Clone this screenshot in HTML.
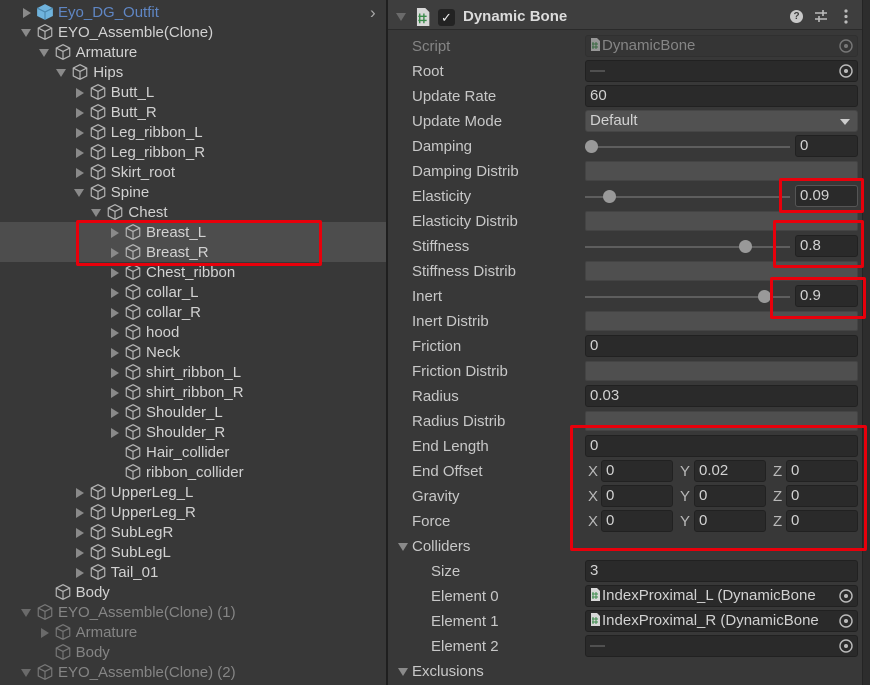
<!DOCTYPE html>
<html><head><meta charset="utf-8"><style>
*{margin:0;padding:0;box-sizing:border-box}
body{width:870px;height:685px;background:#383838;font-family:"Liberation Sans","DejaVu Sans",sans-serif;font-size:15px;color:#d2d2d2;position:relative;overflow:hidden}
.a{position:absolute}
.t{position:absolute;height:20px;line-height:20px;white-space:nowrap}
.ar{position:absolute;width:0;height:0}
.rt{border-left:8px solid #8a8a8a;border-top:5px solid transparent;border-bottom:5px solid transparent}
.dn{border-top:8px solid #8a8a8a;border-left:5px solid transparent;border-right:5px solid transparent}
.dng{border-top:8px solid #6a6a6a;border-left:5px solid transparent;border-right:5px solid transparent}
.lb{position:absolute;left:412px;height:20px;line-height:20px;color:#c8c8c8}
.f{position:absolute;background:#2a2a2a;border:1px solid #212121;border-radius:3px;height:22px;line-height:20px;padding-left:4px;color:#d2d2d2;white-space:nowrap}
.cv{position:absolute;left:585px;width:273px;height:20px;background:#4f4f4f;border:1px solid #444;border-radius:2px}
.tr{position:absolute;left:585px;width:205px;height:2px;background:#5e5e5e}
.th{position:absolute;width:13px;height:13px;border-radius:50%;background:#999}
.red{position:absolute;border:3px solid #e8000b;border-radius:2px}
.xl{position:absolute;height:20px;line-height:20px;color:#b8b8b8}
</style></head><body>
<svg width="0" height="0" style="position:absolute"><defs>
<symbol id="cube" viewBox="0 0 16 16"><path d="M8 1.5L14 4.5V11.5L8 14.5L2 11.5V4.5Z M2 4.5L8 7.5L14 4.5 M8 7.5V14.5" fill="none" stroke="currentColor" stroke-width="1.05" stroke-linejoin="round"/></symbol>
<symbol id="tgt" viewBox="0 0 16 16"><circle cx="8" cy="8" r="6" fill="none" stroke="currentColor" stroke-width="1.4"/><circle cx="8" cy="8" r="2" fill="currentColor"/></symbol>
<symbol id="scr" viewBox="0 0 10 13"><path d="M1 0H7L10 3V13H1Z" fill="#d8d8d8"/><path d="M3 4V11M6 4V11M2 6H8M2 9H8" stroke="#3a8a4a" stroke-width="1"/></symbol>
</defs></svg>

<div class="a" style="left:0;top:222px;width:386px;height:40px;background:#4d4d4d"></div>
<div class="a" style="left:386px;top:0;width:2px;height:685px;background:#1f1f1f"></div>
<div class="t" style="left:370px;top:3px;color:#aaa;font-size:17px">&#8250;</div>

<div id="tree"></div>
<div class="red" style="left:76px;top:220px;width:246px;height:46px"></div>

<div class="a" style="left:388px;top:0;width:474px;height:30px;background:#3e3e3e;border-bottom:1px solid #2a2a2a"></div>
<div class="a" style="left:862px;top:0;width:8px;height:685px;background:#2d2d2d;border-left:1px solid #242424"></div>
<div class="ar dng" style="left:396px;top:13px"></div>
<svg class="a" style="left:415px;top:8px" width="15" height="18" viewBox="0 0 10 13"><use href="#scr"/></svg>
<div class="a" style="left:438px;top:9px;width:17px;height:17px;background:#232323;border-radius:3px;color:#eee;font-size:13px;line-height:17px;text-align:center">&#10003;</div>
<div class="t" style="left:463px;top:7px;font-weight:bold;color:#dcdcdc">Dynamic Bone</div>
<div class="a" style="left:790px;top:10px;width:13px;height:13px;border-radius:50%;background:#c8c8c8;color:#3e3e3e;font-size:10px;font-weight:bold;line-height:13px;text-align:center">?</div>
<svg class="a" style="left:814px;top:9px" width="14" height="14"><path d="M1 4H13M1 10H13M9 1V7M5 7V13" stroke="#bbb" stroke-width="1.6"/></svg>
<svg class="a" style="left:843px;top:9px" width="6" height="16"><circle cx="3" cy="2" r="1.6" fill="#bbb"/><circle cx="3" cy="7.5" r="1.6" fill="#bbb"/><circle cx="3" cy="13" r="1.6" fill="#bbb"/></svg>

<div id="insp"></div>

<div class="red" style="left:779px;top:178px;width:85px;height:35px"></div>
<div class="red" style="left:773px;top:220px;width:91px;height:48px"></div>
<div class="red" style="left:770px;top:277px;width:96px;height:42px"></div>
<div class="red" style="left:570px;top:425px;width:297px;height:126px"></div>

<script>
var T=[["Eyo_DG_Outfit",0,"r","b"],["EYO_Assemble(Clone)",0,"d"],["Armature",1,"d"],["Hips",2,"d"],["Butt_L",3,"r"],["Butt_R",3,"r"],["Leg_ribbon_L",3,"r"],["Leg_ribbon_R",3,"r"],["Skirt_root",3,"r"],["Spine",3,"d"],["Chest",4,"d"],["Breast_L",5,"r"],["Breast_R",5,"r"],["Chest_ribbon",5,"r"],["collar_L",5,"r"],["collar_R",5,"r"],["hood",5,"r"],["Neck",5,"r"],["shirt_ribbon_L",5,"r"],["shirt_ribbon_R",5,"r"],["Shoulder_L",5,"r"],["Shoulder_R",5,"r"],["Hair_collider",5,""],["ribbon_collider",5,""],["UpperLeg_L",3,"r"],["UpperLeg_R",3,"r"],["SubLegR",3,"r"],["SubLegL",3,"r"],["Tail_01",3,"r"],["Body",1,""],["EYO_Assemble(Clone) (1)",0,"d","g"],["Armature",1,"r","g"],["Body",1,"","g"],["EYO_Assemble(Clone) (2)",0,"d","g"]];
var h="";
T.forEach(function(r,i){var top=3+20*i,x=58+r[1]*17.6;var g=r[3]=="g",b=r[3]=="b";
var col=b?"#5f86c4":(g?"#858585":"#d2d2d2");var ic=b?"#6fb3dd":(g?"#777":"#b5b5b5");
if(r[2]=="r")h+='<div class="ar rt" style="left:'+(x-35)+'px;top:'+(top+5)+'px;'+(g?'border-left-color:#6a6a6a':'')+'"></div>';
if(r[2]=="d")h+='<div class="ar '+(g?'dng':'dn')+'" style="left:'+(x-37)+'px;top:'+(top+6)+'px"></div>';
if(b)h+='<svg class="a" style="left:'+(x-22)+'px;top:'+(top)+'px" width="18" height="18" viewBox="0 0 16 16"><path d="M8 1L15 4.5V11.5L8 15L1 11.5V4.5Z" fill="#6fb3dd"/><path d="M1 4.5L8 8L15 4.5M8 8V15" stroke="#4a86ad" fill="none"/></svg>';
else h+='<svg class="a" style="left:'+(x-22)+'px;top:'+(top)+'px;color:'+ic+'" width="18" height="18"><use href="#cube"/></svg>';
h+='<div class="t" style="left:'+x+'px;top:'+top+'px;color:'+col+'">'+r[0]+'</div>';});
document.getElementById("tree").innerHTML=h;

function cy(k){return 47+25*k}
var L=["Script","Root","Update Rate","Update Mode","Damping","Damping Distrib","Elasticity","Elasticity Distrib","Stiffness","Stiffness Distrib","Inert","Inert Distrib","Friction","Friction Distrib","Radius","Radius Distrib","End Length","End Offset","Gravity","Force","Colliders","Size","Element 0","Element 1","Element 2","Exclusions"];
var s="";
L.forEach(function(l,k){var y=cy(k)-10;var x=412;if(k>=21&&k<=24)x=431;
s+='<div class="lb" style="left:'+x+'px;top:'+y+'px;'+(k==0?'color:#858585':'')+'">'+l+'</div>';
if(k==20||k==25)s+='<div class="ar dn" style="left:398px;top:'+(y+6)+'px"></div>';});
function fld(k,txt,x,w,ex){var y=cy(k)-12;s+='<div class="f" style="left:'+x+'px;top:'+y+'px;width:'+w+'px;'+(ex||'')+'">'+txt+'</div>';}
function tgt(k,c){s+='<svg class="a" style="left:838px;top:'+(cy(k)-9)+'px;color:'+c+'" width="16" height="16"><use href="#tgt"/></svg>';}
fld(0,'<svg width="10" height="13" style="vertical-align:-1px;opacity:.6;margin-right:2px"><use href="#scr"/></svg>DynamicBone',585,273,'background:#353535;border-color:#303030;color:#858585');tgt(0,"#777");
fld(1,'<span style="color:#777">—</span>',585,273);tgt(1,"#bbb");
fld(2,'60',585,273);
fld(3,'Default',585,273,'background:#515151;border-color:#464646');
s+='<div class="a" style="left:840px;top:'+(cy(3)-3)+'px;border-top:6px solid #ccc;border-left:5px solid transparent;border-right:5px solid transparent"></div>';
[[4,591,"0"],[6,609,"0.09"],[8,745,"0.8"],[10,764,"0.9"]].forEach(function(a){var k=a[0];
s+='<div class="tr" style="top:'+(cy(k)-1)+'px"></div><div class="th" style="left:'+(a[1]-6)+'px;top:'+(cy(k)-7)+'px"></div>';
fld(k,a[2],795,63,k==6?'border-color:#555':'');});
[5,7,9,11,13,15].forEach(function(k){s+='<div class="cv" style="top:'+(cy(k)-11)+'px"></div>';});
fld(12,'0',585,273);fld(14,'0.03',585,273);fld(16,'0',585,273);
[[17,"0","0.02","0"],[18,"0","0","0"],[19,"0","0","0"]].forEach(function(a){var k=a[0];
s+='<div class="xl" style="left:588px;top:'+(cy(k)-10)+'px">X</div><div class="xl" style="left:680px;top:'+(cy(k)-10)+'px">Y</div><div class="xl" style="left:773px;top:'+(cy(k)-10)+'px">Z</div>';
fld(k,a[1],601,72);fld(k,a[2],694,72);fld(k,a[3],786,72);});
fld(21,'3',585,273);
fld(22,'<svg width="10" height="13" style="vertical-align:-1px;margin-right:2px"><use href="#scr"/></svg>IndexProximal_L (DynamicBone',585,273,'overflow:hidden');tgt(22,"#bbb");
fld(23,'<svg width="10" height="13" style="vertical-align:-1px;margin-right:2px"><use href="#scr"/></svg>IndexProximal_R (DynamicBone',585,273,'overflow:hidden');tgt(23,"#bbb");
fld(24,'<span style="color:#777">—</span>',585,273);tgt(24,"#bbb");
document.getElementById("insp").innerHTML=s;
</script>
</body></html>
